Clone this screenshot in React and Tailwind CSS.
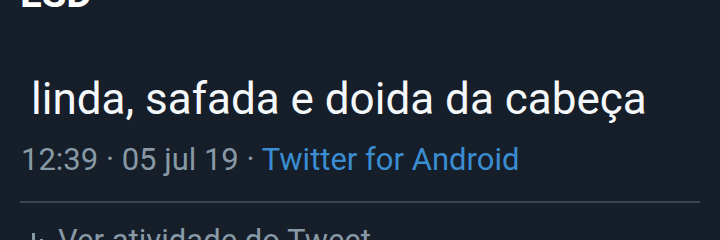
export default function App() {
  return (
    <div
      className="w-[720px] h-[240px] overflow-hidden bg-[#161e2a] flex flex-col"
      style={{ fontFamily: 'Roboto, "Liberation Sans", sans-serif' }}
    >
      {/* Cut-off title */}
      <div className="h-[8px] shrink-0 overflow-hidden">
        <div className="mt-[-28px] pl-[20px] text-[40px] leading-[44px] font-bold text-white">
          LSD
        </div>
      </div>

      {/* Tweet body */}
      <p className="shrink-0 mt-[67px] pl-[31px] text-[44px] leading-[48px] text-[#f5f8fa]">
        linda, safada e doida da cabeça
      </p>

      {/* Meta */}
      <div className="shrink-0 mt-[19px] pl-[21px] text-[31px] leading-[36px] text-[#8899a6]">
        12:39 · 05 jul 19 · <span className="text-[#3a8dd0]">Twitter for Android</span>
      </div>

      {/* Divider */}
      <div className="shrink-0 mt-[23px] ml-[20px] w-[680px] h-[2px] bg-[#3a4550]" />

      {/* Activity */}
      <div className="shrink-0 mt-[20px] pl-[22px] flex items-start gap-[12px] text-[31px] leading-[36px] text-[#8899a6]">
        <svg width="24" height="28" viewBox="0 0 24 28" className="mt-[6px]">
          <rect x="2" y="14" width="3" height="14" fill="#8899a6" />
          <rect x="10" y="4" width="3" height="24" fill="#8899a6" />
          <rect x="18" y="10" width="3" height="18" fill="#8899a6" />
        </svg>
        <span>Ver atividade do Tweet</span>
      </div>
    </div>
  );
}
